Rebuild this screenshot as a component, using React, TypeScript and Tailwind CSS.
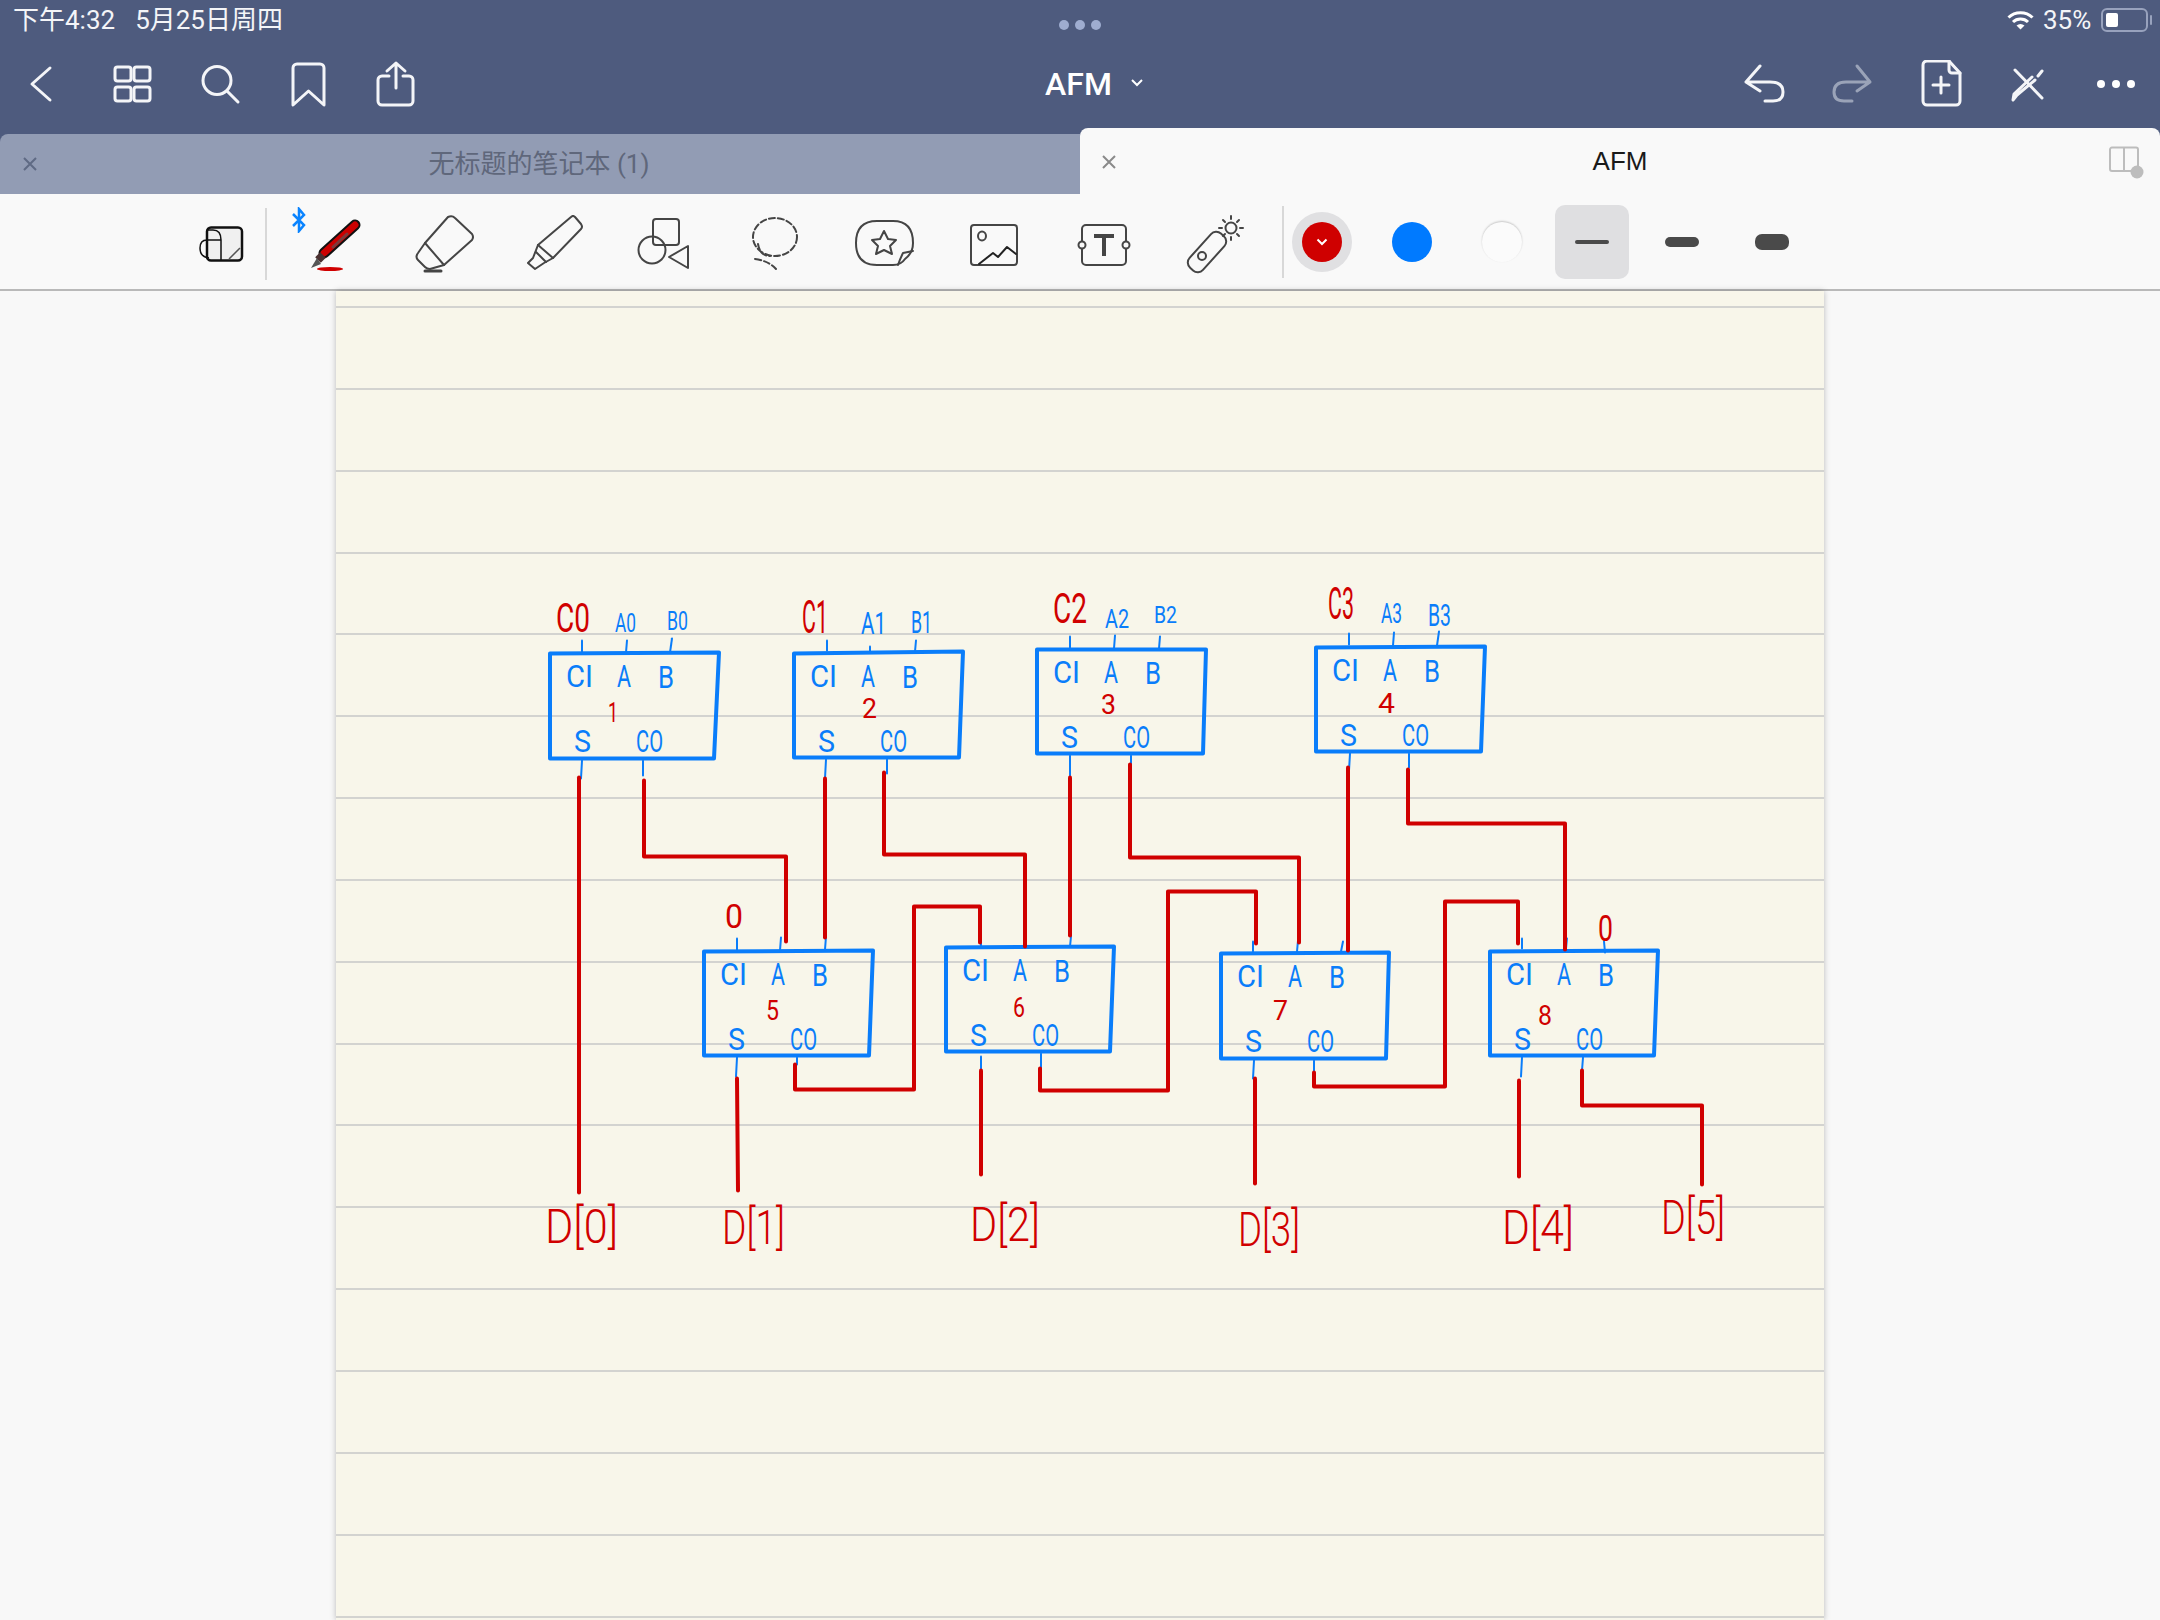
const navBase = 'fill-none stroke-[3] [stroke-linecap:round] [stroke-linejoin:round]';
const toolStroke = 'fill-none stroke-[#454545] stroke-2 [stroke-linecap:round] [stroke-linejoin:round]';

function NavIcon({ children, className = '', dim = false }: { children: React.ReactNode; className?: string; dim?: boolean }) {
  return (
    <svg viewBox="0 0 48 48" className={`w-[48px] h-[48px] shrink-0 ${navBase} ${dim ? 'stroke-[#9aa3b8]' : 'stroke-[#f4f5f8]'} ${className}`}>
      {children}
    </svg>
  );
}

function ToolIcon({ children }: { children: React.ReactNode }) {
  return (
    <svg viewBox="0 0 60 60" className={`w-[60px] h-[60px] shrink-0 ${toolStroke}`}>
      {children}
    </svg>
  );
}

// every coordinate below is a page pixel, the svg viewBox starts at the paper's corner
const boxes = [
  { x: 550, y: 653, d: 'M550 653 L719 652 L714 758 L550 758 Z', n: '1', nx: 608, ny: 721, nw: 10 },
  { x: 794, y: 653, d: 'M794 653 L963 651 L959 757 L794 757 Z', n: '2', nx: 862, ny: 717, nw: 15 },
  { x: 1037, y: 649, d: 'M1037 649 L1206 649 L1203 753 L1037 753 Z', n: '3', nx: 1101, ny: 713, nw: 15 },
  { x: 1316, y: 647, d: 'M1316 647 L1485 646 L1481 751 L1316 751 Z', n: '4', nx: 1378, ny: 712, nw: 17 },
  { x: 704, y: 951, d: 'M704 951 L873 950 L869 1055 L704 1055 Z', n: '5', nx: 766, ny: 1019, nw: 13 },
  { x: 946, y: 947, d: 'M946 947 L1114 946 L1110 1051 L946 1051 Z', n: '6', nx: 1013, ny: 1016, nw: 12 },
  { x: 1221, y: 953, d: 'M1221 953 L1389 952 L1386 1058 L1221 1058 Z', n: '7', nx: 1273, ny: 1019, nw: 15 },
  { x: 1490, y: 951, d: 'M1490 951 L1658 950 L1654 1055 L1490 1055 Z', n: '8', nx: 1538, ny: 1024, nw: 14 },
];

const ticks = [
  'M582 640 V651', 'M627 640 L626 652', 'M672 638 L670 652', 'M582 760 L581 778', 'M643 760 V775',
  'M827 640 V650', 'M870 646 V651', 'M916 640 L915 651', 'M826 759 L825 778', 'M887 759 V773',
  'M1070 636 V647', 'M1115 635 L1114 648', 'M1160 636 L1159 648', 'M1070 755 V775', 'M1131 755 V770',
  'M1349 633 V644', 'M1394 632 L1393 645', 'M1439 631 L1437 645', 'M1350 753 L1349 770', 'M1409 753 V767',
  'M737 938 V950', 'M781 937 L780 950', 'M826 936 L825 949', 'M737 1057 L736 1076', 'M797 1057 V1064',
  'M981 942 V946', 'M1071 936 L1070 946', 'M981 1056 V1068', 'M1041 1053 V1068',
  'M1253 941 V951', 'M1298 940 L1297 951', 'M1343 941 L1341 951', 'M1254 1060 L1253 1078', 'M1314 1060 V1072',
  'M1522 938 V948', 'M1567 938 L1566 948', 'M1604 941 L1605 952', 'M1522 1057 L1521 1076', 'M1583 1057 L1582 1070',
];

const wires = [
  'M579 777 V1192',
  'M644 780 V856 H786 V941',
  'M825 778 V937',
  'M884 772 V854 H1025 V946',
  'M1070 777 V935',
  'M1130 764 V857 H1299 V942',
  'M1348 767 V950',
  'M1408 769 V823 H1565 V949',
  'M795 1064 V1089 H914 V906 H980 V942',
  'M1040 1068 V1090 H1168 V891 H1256 V943',
  'M1314 1072 V1086 H1445 V901 H1518 V943',
  'M1582 1070 V1105 H1702 V1184',
  'M737 1078 L738 1190',
  'M981 1070 V1174',
  'M1255 1078 V1183',
  'M1519 1080 V1176',
];

const labels = [
  { t: 'C0', x: 556, y: 631, w: 34, s: 40, red: true },
  { t: 'A0', x: 615, y: 631, w: 21, s: 26 },
  { t: 'B0', x: 667, y: 629, w: 21, s: 26 },
  { t: 'C1', x: 802, y: 632, w: 26, s: 46, red: true },
  { t: 'A1', x: 861, y: 633, w: 25, s: 32 },
  { t: 'B1', x: 911, y: 632, w: 21, s: 32 },
  { t: 'C2', x: 1053, y: 622, w: 34, s: 42, red: true },
  { t: 'A2', x: 1105, y: 627, w: 24, s: 26 },
  { t: 'B2', x: 1154, y: 622, w: 23, s: 24 },
  { t: 'C3', x: 1328, y: 618, w: 26, s: 44, red: true },
  { t: 'A3', x: 1381, y: 622, w: 21, s: 28 },
  { t: 'B3', x: 1428, y: 625, w: 23, s: 32 },
  { t: '0', x: 725, y: 927, w: 18, s: 34, red: true },
  { t: '0', x: 1598, y: 940, w: 15, s: 36, red: true },
  { t: 'D[0]', x: 545, y: 1242, w: 73, s: 48, red: true, light: true },
  { t: 'D[1]', x: 722, y: 1243, w: 63, s: 48, red: true, light: true },
  { t: 'D[2]', x: 970, y: 1240, w: 70, s: 48, red: true, light: true },
  { t: 'D[3]', x: 1238, y: 1245, w: 62, s: 48, red: true, light: true },
  { t: 'D[4]', x: 1502, y: 1243, w: 72, s: 48, red: true, light: true },
  { t: 'D[5]', x: 1661, y: 1233, w: 64, s: 48, red: true, light: true },
];

function Hand({ t, x, y, w, s, red, light }: { t: string; x: number; y: number; w: number; s: number; red?: boolean; light?: boolean }) {
  return (
    <text
      x={x}
      y={y}
      fontSize={s}
      textLength={w}
      lengthAdjust="spacingAndGlyphs"
      className={`font-['Roboto',sans-serif] ${light ? 'font-light' : 'font-normal'} ${red ? 'fill-[#d00000]' : 'fill-[#0a7dfa]'}`}
    >
      {t}
    </text>
  );
}

function Diagram() {
  return (
    <svg viewBox="336 290.5 1488 1329" className="absolute inset-0 w-[1488px] h-[1329px]">
      {boxes.map((b) => (
        <g key={b.n}>
          <path d={b.d} className="fill-none stroke-[#0a7dfa] stroke-[4] [stroke-linejoin:round]" />
          <Hand t="CI" x={b.x + 16} y={b.y + 33} w={27} s={32} />
          <Hand t="A" x={b.x + 67} y={b.y + 33} w={14} s={32} />
          <Hand t="B" x={b.x + 108} y={b.y + 34} w={16} s={32} />
          <Hand t="S" x={b.x + 24} y={b.y + 98} w={17} s={32} />
          <Hand t="CO" x={b.x + 86} y={b.y + 98} w={27} s={32} />
          <Hand t={b.n} x={b.nx} y={b.ny} w={b.nw} s={28} red />
        </g>
      ))}
      {ticks.map((d) => (
        <path key={d} d={d} className="fill-none stroke-[#0a7dfa] stroke-2 [stroke-linecap:round]" />
      ))}
      {wires.map((d) => (
        <path key={d} d={d} className="fill-none stroke-[#d00000] stroke-[4] [stroke-linecap:round] [stroke-linejoin:round]" />
      ))}
      {labels.map((l) => (
        <Hand key={l.t + l.x} {...l} />
      ))}
    </svg>
  );
}

function StatusBar() {
  return (
    <div className="h-[40px] grid grid-cols-3 items-center text-[26px] leading-none text-[#f4f5f8] font-['Roboto','Noto_Sans_CJK_SC',sans-serif]">
      <div className="pl-[13px] flex gap-[20px]">
        <span>下午4:32</span>
        <span>5月25日周四</span>
      </div>
      <div className="flex justify-center gap-[6px] pt-[10px]">
        <span className="w-[10px] h-[10px] rounded-full bg-[#9fadd0]" />
        <span className="w-[10px] h-[10px] rounded-full bg-[#9fadd0]" />
        <span className="w-[10px] h-[10px] rounded-full bg-[#9fadd0]" />
      </div>
      <div className="flex justify-end items-center pr-[12px]">
        <svg viewBox="0 0 27 20" className="w-[27px] h-[20px] fill-none stroke-white stroke-[3] [stroke-linecap:butt]">
          <path d="M1.5 7.5 C8 1 19 1 25.5 7.5" />
          <path d="M6 12 C10 8 17 8 21 12" />
          <path d="M13.5 19.5 L9.5 15.5 C12 13.5 15 13.5 17.5 15.5 Z" className="fill-white stroke-none" />
        </svg>
        <span className="ml-[9px] w-[53px]">35%</span>
        <div className="relative ml-[5px] w-[47px] h-[24px] rounded-[6px] border-2 border-[#98a2bd] p-[3px]">
          <div className="w-[12px] h-[14px] rounded-[2px] bg-white" />
          <div className="absolute right-[-6px] top-[5px] w-[2px] h-[10px] rounded-full bg-[#98a2bd]" />
        </div>
      </div>
    </div>
  );
}

function NavBar() {
  return (
    <div className="h-[88px] flex items-center">
      <div className="flex-1 flex items-center pl-[17px] gap-[40px]">
        <NavIcon>
          <path d="M33 8 L15 24 L33 40" />
        </NavIcon>
        <NavIcon className="ml-[3px]">
          <rect x="7" y="7" width="16" height="14" rx="2.5" />
          <rect x="26" y="7" width="16" height="14" rx="2.5" />
          <rect x="7" y="27" width="16" height="14" rx="2.5" />
          <rect x="26" y="27" width="16" height="14" rx="2.5" />
        </NavIcon>
        <NavIcon>
          <circle cx="21" cy="20.5" r="14" />
          <path d="M31 31 L42 42" />
        </NavIcon>
        <NavIcon>
          <path d="M9 45 V8 a4 4 0 0 1 4-4 H36 a4 4 0 0 1 4 4 V45 L24.5 31 Z" />
        </NavIcon>
        <NavIcon>
          <path d="M17 16 H10 a4 4 0 0 0-4 4 V41 a4 4 0 0 0 4 4 H37 a4 4 0 0 0 4-4 V20 a4 4 0 0 0-4-4 H31" />
          <path d="M24 28 V3 M15 11 L24 3 L33 11" />
        </NavIcon>
      </div>
      <div className="relative text-[32px] leading-none font-medium text-white font-['Roboto',sans-serif]">
        AFM
        <svg viewBox="0 0 14 10" className="absolute left-[85px] top-[10px] w-[14px] h-[10px] fill-none stroke-white stroke-2">
          <path d="M2 2 L7 7 L12 2" />
        </svg>
      </div>
      <div className="flex-1 flex items-center justify-end pr-[20px] gap-[40px]">
        <NavIcon>
          <path d="M20 6 L6 22 L20 31 M6 22 H30 Q43 22 43 32 Q43 41 33 41 H25" />
        </NavIcon>
        <NavIcon dim>
          <path d="M29 6 L42 22 L29 31 M42 22 H18 Q6 22 6 32 Q6 41 16 41 H24" />
        </NavIcon>
        <NavIcon>
          <path d="M33 1 H11 a4 4 0 0 0-4 4 V41 a4 4 0 0 0 4 4 H40 a4 4 0 0 0 4-4 V13 Z" />
          <path d="M33 1 V10 a3 3 0 0 0 3 3 H44" />
          <path d="M25 17 V33 M17 25 H33" />
        </NavIcon>
        <NavIcon>
          <path d="M11 10 L38 38" />
          <path d="M38 11 L34 16 M31 20 L13 35 L9 40 L10 34 L28 17" />
        </NavIcon>
        <div className="w-[48px] flex justify-center gap-[7px]">
          <span className="w-[8px] h-[8px] rounded-full bg-white" />
          <span className="w-[8px] h-[8px] rounded-full bg-white" />
          <span className="w-[8px] h-[8px] rounded-full bg-white" />
        </div>
      </div>
    </div>
  );
}

function TabClose({ className }: { className: string }) {
  return (
    <svg viewBox="0 0 16 16" className={`w-[16px] h-[16px] fill-none stroke-2 ${className}`}>
      <path d="M2 2 L14 14 M14 2 L2 14" />
    </svg>
  );
}

function Tabs() {
  return (
    <div className="flex items-end font-['Roboto','Noto_Sans_CJK_SC',sans-serif]">
      <div className="relative w-[1080px] h-[60px] rounded-tl-[8px] bg-[#929cb4] flex items-center justify-center pr-[2px] text-[26px] text-[#5f677b]">
        <TabClose className="absolute left-[22px] top-[22px] stroke-[#5f6a84]" />
        无标题的笔记本 (1)
      </div>
      <div className="relative flex-1 h-[66px] rounded-t-[8px] bg-[#f9f9f9] flex items-center justify-center text-[26px] text-[#1a1a1a] font-['Liberation_Sans',sans-serif]">
        <TabClose className="absolute left-[21px] top-[26px] stroke-[#8a8a8a]" />
        AFM
        <svg viewBox="0 0 38 34" className="absolute right-[14px] top-[18px] w-[38px] h-[34px]">
          <path d="M4 1.5 H28 a2 2 0 0 1 2 2 V25 H4 a2 2 0 0 1-2-2 V3.5 a2 2 0 0 1 2-2 Z M16 1.5 V25" className="fill-none stroke-[#bdbdbd] stroke-2" />
          <circle cx="29" cy="26" r="6.5" className="fill-[#bdbdbd]" />
        </svg>
      </div>
    </div>
  );
}

function Toolbar() {
  return (
    <div className="h-[97px] border-b-2 border-[#b9b9b9] bg-[#f9f9f9] flex items-center">
      <svg viewBox="0 0 45 36" className="ml-[199px] mt-[5px] w-[45px] h-[36px] fill-none stroke-[#111] stroke-[2] shrink-0">
        <rect x="8" y="1.5" width="35" height="33" rx="4" className="fill-[#f0f0f0] stroke-[2.5]" />
        <path d="M8 4 H14 Q22 4 22 14 V34" className="stroke-[1.5]" />
        <path d="M22 14 H8 Q1 14 1 22 Q1 31 10 32 M8 5 V33" className="stroke-[1.5]" />
        <path d="M30 33 L41 22" className="stroke-[#555] stroke-[1.5]" />
      </svg>
      <div className="ml-[21px] mt-[4px] w-[2px] h-[72px] bg-[#d8d8d8]" />
      <div className="relative ml-[38px] mt-[6px] flex gap-[50px]">
        <svg viewBox="0 0 16 26" className="absolute left-[-14px] top-[-8px] w-[16px] h-[26px] fill-none stroke-[#0a84ff] stroke-[2.5]">
          <path d="M2 7 L13 18 L8 24 V2 L13 8 L2 19" />
        </svg>
        <svg viewBox="0 0 60 60" className="w-[60px] h-[60px] shrink-0 fill-none [stroke-linecap:round]">
          <path d="M19 38 L50 10" className="stroke-[#111] stroke-[11]" />
          <path d="M19 38 L50 10" className="stroke-[#cc0000] stroke-[7]" />
          <path d="M28 32 L42 19" className="stroke-[#7a3b3b] stroke-[3]" />
          <path d="M13 45 L18 40" className="stroke-[#4a3030] stroke-[8] [stroke-linecap:butt]" />
          <path d="M6 53 L12 43 L16 49 Z" className="fill-[#555]" />
          <ellipse cx="25" cy="54" rx="13" ry="2" className="fill-[#d00000]" />
        </svg>
        <ToolIcon>
          <path d="M33 2 Q37 0 40 3 L57 19 Q59 22 57 25 L29 50 L15 54 Q12 54 10 52 L3 45 Q0 42 3 38 L10 28 Z" />
          <path d="M10 28 L29 50" />
          <path d="M10 56 H26" className="stroke-[3]" />
        </ToolIcon>
        <ToolIcon>
          <path d="M46 2 Q48 0 50 2 L56 9 Q58 12 56 14 L28 43 L19 48 L10 54 L3 48 L8 43 L13 30 Z" />
          <path d="M13 30 L28 43 M11 37 L21 47" />
        </ToolIcon>
        <ToolIcon>
          <rect x="18" y="4" width="26" height="26" rx="3" />
          <circle cx="17" cy="35" r="13.5" />
          <path d="M53 31 V53 L34 42 Z" />
        </ToolIcon>
        <ToolIcon>
          <ellipse cx="30" cy="22" rx="22" ry="19" strokeDasharray="6 3" />
          <path d="M13 29 Q15 41 25 41 M10 44 Q24 46 31 54" strokeDasharray="6 3" />
        </ToolIcon>
        <ToolIcon>
          <path d="M38 50 H22 Q1 50 1 28 Q1 6 22 6 H38 Q58 6 58 28 Q58 38 50 44 Q46 50 38 50 Z" />
          <path d="M29 16 L33 24 L41 25 L35 31 L37 39 L29 35 L21 39 L23 31 L17 25 L25 24 Z" />
          <path d="M58 36 L48 38 Q45 44 43 50" />
        </ToolIcon>
        <ToolIcon>
          <rect x="6" y="10" width="46" height="40" rx="3" />
          <ellipse cx="17" cy="21" rx="4" ry="4.5" />
          <path d="M14 49 L28 38 L33 42 L42 32 L51 39" className="stroke-[#222]" />
        </ToolIcon>
        <ToolIcon>
          <rect x="7" y="10" width="44" height="40" rx="4" />
          <circle cx="7" cy="30" r="3.5" className="fill-[#f9f9f9]" />
          <circle cx="51" cy="30" r="3.5" className="fill-[#f9f9f9]" />
          <path d="M19 21 H39 M29 21 V41" className="stroke-[4] [stroke-linecap:butt]" />
        </ToolIcon>
        <ToolIcon>
          <rect x="13" y="14" width="18" height="46" rx="7" transform="rotate(42 22 37)" />
          <circle cx="17" cy="41" r="4" />
          <circle cx="46" cy="13" r="5.5" />
          <path d="M46 1 V4 M46 22 V25 M34 13 H37 M55 13 H58 M38 5 L40 7 M52 19 L54 21 M38 21 L40 19 M52 7 L54 5" />
        </ToolIcon>
      </div>
      <div className="ml-[37px] w-[2px] h-[72px] bg-[#d8d8d8]" />
      <div className="ml-[8px] flex items-center gap-[30px]">
        <div className="w-[60px] h-[60px] rounded-full bg-[#e0e0e2] flex items-center justify-center">
          <div className="w-[40px] h-[40px] rounded-full bg-[#cf0000] flex items-center justify-center">
            <svg viewBox="0 0 12 8" className="w-[12px] h-[8px] fill-none stroke-white stroke-2">
              <path d="M1.5 1.5 L6 6 L10.5 1.5" />
            </svg>
          </div>
        </div>
        <div className="w-[60px] h-[60px] flex items-center justify-center">
          <div className="w-[40px] h-[40px] rounded-full bg-[#007aff]" />
        </div>
        <div className="w-[60px] h-[60px] flex items-center justify-center">
          <div className="w-[40px] h-[40px] rounded-full bg-[#fbfbfb] shadow-[0_-1px_2px_rgba(0,0,0,0.2)]" />
        </div>
        <div className="w-[74px] h-[74px] -mx-[7px] rounded-[10px] bg-[#dfdfe1] flex items-center justify-center">
          <div className="w-[34px] h-[4px] rounded-full bg-[#4a4a4a]" />
        </div>
        <div className="w-[60px] h-[60px] flex items-center justify-center">
          <div className="w-[34px] h-[10px] rounded-[5px] bg-[#4a4a4a]" />
        </div>
        <div className="w-[60px] h-[60px] flex items-center justify-center">
          <div className="w-[34px] h-[16px] rounded-[7px] bg-[#4a4a4a]" />
        </div>
      </div>
    </div>
  );
}

function Paper() {
  const rows = Array.from({ length: 16 }, (_, i) => i);
  return (
    <div className="relative ml-[336px] w-[1488px] flex-1 bg-[#f8f6ea] shadow-[0_0_6px_rgba(0,0,0,0.25)]">
      <div className="h-[17px] border-b-2 border-[#d3d3d0]" />
      {rows.map((i) => (
        <div key={i} className="h-[81.85px] border-b-2 border-[#d3d3d0]" />
      ))}
      <Diagram />
    </div>
  );
}

export default function App() {
  return (
    <div className="w-[2160px] h-[1620px] overflow-hidden bg-[#f8f8f8] flex flex-col">
      <div className="bg-[#4e5b7e]">
        <StatusBar />
        <NavBar />
        <Tabs />
      </div>
      <Toolbar />
      <Paper />
    </div>
  );
}
